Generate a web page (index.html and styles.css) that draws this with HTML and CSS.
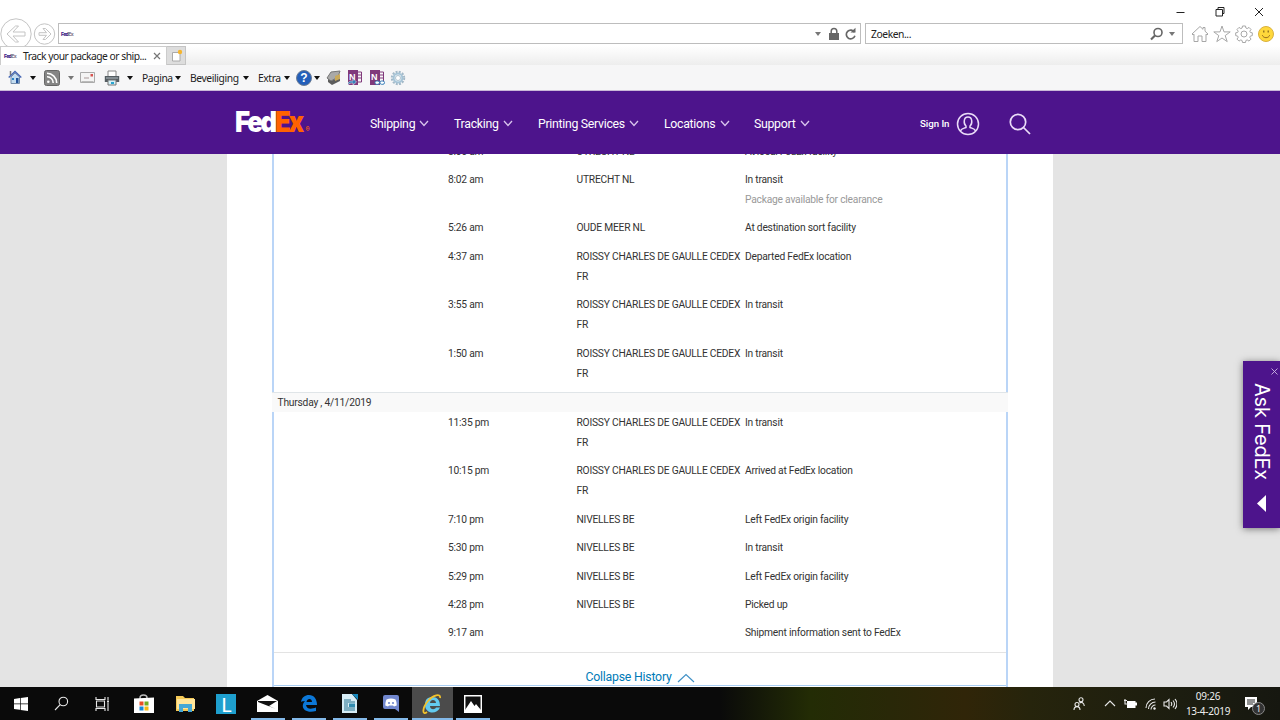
FILE: index.html
```html
<!DOCTYPE html>
<html lang="nl">
<head>
<meta charset="utf-8">
<title>Track your package or shipment</title>
<link rel="stylesheet" href="styles.css">
</head>
<body>
<div class="window">
  <header class="chrome">
    <div class="window-buttons">
      <svg width="12" height="12" viewBox="0 0 12 12"><path d="M1.500 6.500h8" class="ink"/></svg>
      <svg width="12" height="12" viewBox="0 0 12 12"><path d="M2 3.500h6.500v6.500H2zM4 3.500v-2h6v6H8.500" class="ink"/></svg>
      <svg width="12" height="12" viewBox="0 0 12 12"><path d="M2 2l8 8M10 2L2 10" class="ink"/></svg>
    </div>
    <div class="address-row">
      <div class="nav-circles">
        <svg width="56" height="33" viewBox="0 0 56 33"><g fill="#fff" stroke="#c4c4c4"><circle cx="16" cy="16" r="15.200"/><circle cx="44.500" cy="16" r="10.200"/><path d="M7 16l8.500-8h3l-5.500 6h12v4H13l5.500 6h-3zM51 16l-5.500-5.500h-2.500l3.500 4.200h-7.500v2.600h7.500L43 21.500h2.500z"/></g></svg>
      </div>
      <div class="address">
        <span class="mini-logo">Fed<i>Ex</i></span>
        <span class="tri tri-soft push"></span>
        <svg class="lock" width="12" height="14" viewBox="0 0 12 14"><path d="M1 6h10v7H1z" fill="#666"/><path d="M3.200 6V4.200a2.800 2.800 0 0 1 5.600 0V6" fill="none" stroke="#666" stroke-width="1.500"/></svg>
        <svg class="reload" width="13" height="14" viewBox="0 0 13 14"><path d="M10.500 5.200a4.400 4.400 0 1 0 .4 3.600" fill="none" stroke="#666" stroke-width="1.700"/><path d="M6.500 5.600h5V.8z" fill="#666"/></svg>
      </div>
      <div class="search">
        <span>Zoeken...</span>
        <svg class="push" width="14" height="14" viewBox="0 0 14 14"><circle cx="8" cy="5.500" r="4" fill="none" stroke="#666" stroke-width="1.600"/><path d="M5 8.500l-4 4" stroke="#666" stroke-width="2.200"/></svg>
        <span class="tri tri-soft"></span>
      </div>
      <div class="tools">
        <svg width="18" height="18" viewBox="0 0 18 18"><path d="M1 9l8-7.500 3 2.800V2.500h2v3.700L17 9l-1 1-1-.8V16.500h-4V11H7v5.500H3V9.200l-1 .8z" class="outline"/></svg>
        <svg width="18" height="18" viewBox="0 0 18 18"><path d="M9 1l2 5.900h6.200l-5 3.700 2 6L9 13l-5.200 3.600 2-6-5-3.700H7z" class="outline"/></svg>
        <svg width="18" height="18" viewBox="0 0 18 18"><path d="M7.500 1h3l.4 2 1.300.6 1.800-1.200 2 2.100-1.200 1.700.5 1.200 2 .4v2.800l-2 .5-.5 1.200 1.200 1.800-2 2-1.800-1.200-1.300.6-.4 2h-3l-.4-2-1.300-.6L4 16.100l-2-2 1.200-1.800-.5-1.200-2-.5V7.800l2-.4.500-1.200L2 4.500l2-2.100 1.800 1.200L7.100 3z" class="outline"/><circle cx="9" cy="9" r="3" class="outline"/></svg>
        <svg width="18" height="18" viewBox="0 0 18 18"><circle cx="9" cy="9" r="7.500" fill="#ffd83b" stroke="#d9b13f"/><path d="M5.300 10.200c1.200 3.300 6.200 3.300 7.400 0" fill="none" stroke="#9a701d"/><path d="M6.800 5.500v2M11.200 5.500v2" stroke="#80631b" stroke-width="1.200"/></svg>
      </div>
    </div>
    <div class="tab-row">
      <div class="tab"><span class="mini-logo">Fed<i>Ex</i></span><span class="tab-title">Track your package or ship...</span>
        <svg width="8" height="8" viewBox="0 0 8 8"><path d="M1 1l6 6M7 1L1 7" stroke="#777" stroke-width="1.200"/></svg></div>
      <div class="new-tab"><svg width="12" height="13" viewBox="0 0 12 13"><path d="M1.500 3.500h7.500v8.500H1.500z" fill="#fff" stroke="#aaa"/><circle cx="9" cy="3" r="2.200" fill="#f5b52e"/></svg></div>
    </div>
    <div class="command-row">
      <svg class="c-home" width="14" height="15" viewBox="0 0 14 15"><path d="M3 7v6.500h8.500V7L7 3z" fill="#c3dcf0" stroke="#778eaa"/><path d="M.7 7.500L7 1.500l6.300 6" fill="none" stroke="#4566b3" stroke-width="1.400"/><path d="M2.500 1v4" stroke="#777" stroke-width="1.500"/><path d="M8 8h2.500v5H8z" fill="#21529b"/><path d="M4 8h2v2H4z" fill="#2d85c6"/></svg>
      <span class="tri"></span>
      <svg class="c-rss" width="16" height="16" viewBox="0 0 16 16"><rect x=".5" y=".5" width="15" height="15" rx="2" fill="#858585" stroke="#666"/><circle cx="4.300" cy="11.700" r="1.300" fill="#fff"/><path d="M3 6.800a6 6 0 0 1 6.200 6.200M3 3.300A9.700 9.700 0 0 1 12.700 13" fill="none" stroke="#fff" stroke-width="1.600"/></svg>
      <span class="tri tri-soft"></span>
      <svg class="c-mail" width="15" height="11" viewBox="0 0 15 11"><path d="M.5.500h14v10H.5z" fill="#f4f4f4" stroke="#aaa"/><path d="M1.500 9.500h12" stroke="#bbb"/><path d="M10.500 2h2.500v2.500h-2.500z" fill="#d65451"/><path d="M4 6h5" stroke="#a99"/></svg>
      <svg class="c-print" width="16" height="16" viewBox="0 0 16 16"><path d="M4 1h8v6H4z" fill="#fff" stroke="#888"/><path d="M.8 6h14.400v6H.8z" fill="#555d62"/><path d="M2 8h12" stroke="#b5bfc4"/><path d="M4 10h8v5H4z" fill="#d8f0f7" stroke="#777"/><path d="M7 12h3v2H7z" fill="#28a5d1"/></svg>
      <span class="tri"></span>
      <span class="cmd c-page">Pagina</span><span class="tri"></span>
      <span class="cmd c-sec">Beveiliging</span><span class="tri"></span>
      <span class="cmd c-extra">Extra</span><span class="tri"></span>
      <span class="help">?</span><span class="tri help-tri"></span>
      <svg class="c-block" width="16" height="16" viewBox="0 0 16 16"><path d="M1 8l4-6 9-1-2 6-7 4z" fill="#a9a9a9" stroke="#777"/><path d="M2 9l3 2 9-4v4l-8 4-4-3z" fill="#5c5c5c"/><path d="M9 6l5-2v5l-5 2z" fill="#c9a95a"/></svg>
      <span class="onenote">N<svg width="15" height="15" viewBox="0 0 15 15"><path d="M10 2h3.500v10H10M10 5h3M10 8h3" fill="none" stroke="#80397b"/><path d="M0 15c0-4 2-4 5-4V8.500l3.500 3.500L5 15v-2c-2 0-4 0-5 2z" fill="#347db8" stroke="#f6f6f7" stroke-width=".5"/></svg></span>
      <span class="onenote on-two">N<svg width="15" height="15" viewBox="0 0 15 15"><path d="M10 2h3.500v10H10M10 5h3M10 8h3" fill="none" stroke="#80397b"/><rect x="5" y="11" width="4.500" height="3.300" rx="1.600" fill="#fff" stroke="#347db8"/><rect x="10" y="11" width="4.500" height="3.300" rx="1.600" fill="#fff" stroke="#347db8"/></svg></span>
      <svg class="c-gear" width="16" height="16" viewBox="0 0 16 16"><circle cx="8" cy="8" r="6.200" fill="none" stroke="#a3b9c8" stroke-width="2" stroke-dasharray="2 1.250"/><circle cx="8" cy="8" r="4.400" fill="#e4f0f7" stroke="#a5c3d6" stroke-width="2"/><circle cx="8" cy="8" r="2.500" fill="#fff" stroke="#b2c4cf"/></svg>
    </div>
  </header>

  <nav class="site-nav">
    <div class="brand"><div class="wordmark">Fed<span>Ex</span><small>®</small></div></div>
    <div class="menu m-ship"><span>Shipping</span><svg class="chev" width="10" height="7" viewBox="0 0 10 7"><path d="M1 1l4 4.500L9 1"/></svg></div>
    <div class="menu m-track"><span>Tracking</span><svg class="chev" width="10" height="7" viewBox="0 0 10 7"><path d="M1 1l4 4.500L9 1"/></svg></div>
    <div class="menu m-print"><span>Printing Services</span><svg class="chev" width="10" height="7" viewBox="0 0 10 7"><path d="M1 1l4 4.500L9 1"/></svg></div>
    <div class="menu m-loc"><span>Locations</span><svg class="chev" width="10" height="7" viewBox="0 0 10 7"><path d="M1 1l4 4.500L9 1"/></svg></div>
    <div class="menu m-sup"><span>Support</span><svg class="chev" width="10" height="7" viewBox="0 0 10 7"><path d="M1 1l4 4.500L9 1"/></svg></div>
    <span class="sign-in">Sign In</span>
    <svg class="user" width="24" height="24" viewBox="0 0 24 24"><g fill="none" stroke="#eadcf8" stroke-width="1.500"><circle cx="12" cy="12" r="10.500"/><path d="M4.500 19c.5-2.500 3-2.500 5.500-3.500v-1.500C7.500 12 7.200 5 12 5s4.500 7 2 9v1.500c2.500 1 5 1 5.500 3.500"/></g></svg>
    <svg class="find" width="22" height="22" viewBox="0 0 22 22"><g fill="none" stroke="#eadcf8" stroke-width="1.700"><circle cx="9" cy="9" r="7.700"/><path d="M14.500 14.500l6.500 6.500"/></g></svg>
  </nav>

  <main class="page">
    <div class="panel">
      <section class="history">
        <div class="rows rows-top">
          <div class="row"><time>8:06 am</time><span>UTRECHT NL</span><span>At local FedEx facility</span></div>
          <div class="row"><time>8:02 am</time><span>UTRECHT NL</span><span>In transit<br><em>Package available for clearance</em></span></div>
          <div class="row"><time>5:26 am</time><span>OUDE MEER NL</span><span>At destination sort facility</span></div>
          <div class="row"><time>4:37 am</time><span>ROISSY CHARLES DE GAULLE CEDEX<br>FR</span><span>Departed FedEx location</span></div>
          <div class="row"><time>3:55 am</time><span>ROISSY CHARLES DE GAULLE CEDEX<br>FR</span><span>In transit</span></div>
          <div class="row"><time>1:50 am</time><span>ROISSY CHARLES DE GAULLE CEDEX<br>FR</span><span>In transit</span></div>
        </div>
        <h2 class="day">Thursday , 4/11/2019</h2>
        <div class="rows rows-bottom">
          <div class="row"><time>11:35 pm</time><span>ROISSY CHARLES DE GAULLE CEDEX<br>FR</span><span>In transit</span></div>
          <div class="row"><time>10:15 pm</time><span>ROISSY CHARLES DE GAULLE CEDEX<br>FR</span><span>Arrived at FedEx location</span></div>
          <div class="row"><time>7:10 pm</time><span>NIVELLES BE</span><span>Left FedEx origin facility</span></div>
          <div class="row"><time>5:30 pm</time><span>NIVELLES BE</span><span>In transit</span></div>
          <div class="row"><time>5:29 pm</time><span>NIVELLES BE</span><span>Left FedEx origin facility</span></div>
          <div class="row"><time>4:28 pm</time><span>NIVELLES BE</span><span>Picked up</span></div>
          <div class="row"><time>9:17 am</time><span></span><span>Shipment information sent to FedEx</span></div>
        </div>
        <div class="collapse"><span>Collapse History</span><svg width="18" height="10" viewBox="0 0 18 10"><path d="M1 9l8-7.500L17 9" fill="none" stroke="#4191c6" stroke-width="1.200"/></svg></div>
      </section>
    </div>
  </main>

  <aside class="ask">
    <svg width="7" height="7" viewBox="0 0 7 7"><path d="M.5.500l6 6M6.500.500l-6 6" stroke="#cdb6e4" stroke-width=".9"/></svg>
    <span>Ask FedEx</span>
    <svg class="ask-arrow" width="9" height="17" viewBox="0 0 9 17"><path d="M9 0v17L0 8.500z" fill="#fff"/></svg>
  </aside>

  <footer class="taskbar">
    <div class="apps">
      <div><svg width="14" height="14" viewBox="0 0 14 14"><path d="M0 2l6-.9v5.500H0zM6.700 1L14 0v6.600H6.700zM0 7.300h6v5.500L0 12zM6.700 7.300H14V14l-7.300-1z" fill="#fff"/></svg></div>
      <div><svg width="15" height="15" viewBox="0 0 15 15"><circle cx="9.300" cy="5.500" r="4.300" class="light"/><path d="M6.200 8.700L1 14" class="light"/></svg></div>
      <div><svg width="15" height="14" viewBox="0 0 15 14"><path d="M1.500 4h8v6h-8zM1 0v2.500h9V0M1 14v-2.500h9V14M13 0v3M13 6v8" class="light"/><path d="M12 3.500h2v2h-2z" fill="#ddd"/></svg></div>
      <div><svg width="20" height="20" viewBox="0 0 20 20"><path d="M6 6V4c0-4 7-4 7 0v2" fill="none" stroke="#bbb" stroke-width="1.500"/><path d="M0 4.500l20-1V19H0z" fill="#fff"/><path d="M5.500 7.500h4v4h-4z" fill="#e84f26"/><path d="M10.500 7.500h4v4h-4z" fill="#72ad22"/><path d="M5.500 12.500h4v4h-4z" fill="#1689d9"/><path d="M10.500 12.500h4v4h-4z" fill="#f5b914"/></svg></div>
      <div><svg width="19" height="17" viewBox="0 0 19 17"><path d="M0 1h7l2 2h9v13H0z" fill="#f5c956"/><path d="M1 4h18v10H1z" fill="#ffe59a"/><path d="M3 17V9h13v8h-4v-4H7v4z" fill="#45a7d5"/></svg></div>
      <div><span class="l-app">L</span></div>
      <div class="open"><svg width="21" height="17" viewBox="0 0 21 17"><path d="M0 6l10.500-6L21 6v11H0z" fill="#fff"/><path d="M1 6h19l-8 5 7 3L1 7z" fill="#111"/></svg></div>
      <div class="open"><svg width="18" height="17" viewBox="0 0 18 17"><path d="M1 7C2 2 5 0 9 0c5 0 8 4 8 10H6c1 5 6 4 10 2.500V16C6 19-1 13 5 6c-2 .2-3 .2-4 1zM6.500 7H12c0-4-5-4-5.500 0z" fill="#0c78d8"/></svg></div>
      <div class="open"><svg width="16" height="19" viewBox="0 0 16 19"><path d="M0 0h10l5 6v13H0z" fill="#d7edf6"/><path d="M10 0h6v6z" fill="#1688bd"/><path d="M2 6h7M2 8h11M2 10h4M2 12h4M2 14h11M2 16h11" stroke="#24718e"/><path d="M7 9.500h6v3.500H7z" fill="#328db1"/></svg></div>
      <div class="open"><svg width="16" height="17" viewBox="0 0 16 17"><path d="M2 0h12a2 2 0 0 1 2 2v15l-4-3H2a2 2 0 0 1-2-2V2a2 2 0 0 1 2-2z" fill="#7187ce"/><path d="M3.500 4.500c3-1.500 6-1.500 9 0 1 2 1.300 4 1.200 6L11 11.500l-1-1H6l-1 1-2.700-1c0-2 .3-4 1.200-6z" fill="#fff"/><circle cx="6" cy="8" r="1.100" fill="#7187ce"/><circle cx="10" cy="8" r="1.100" fill="#7187ce"/></svg></div>
      <div class="open active"><svg width="20" height="20" viewBox="0 0 20 20"><path d="M3 11C3 5 6 3 10.500 3S18 6 18 12H8c0 4 5 4 6 1.500h4C15 21 3 20 3 11zm5-2h6c0-4-6-4-6 0z" fill="#63caef"/><path d="M5 18C0 22 0 14 6 7 11 1 19-1 18 4" fill="none" stroke="#f2c22c" stroke-width="1.800"/></svg></div>
      <div class="open"><svg width="18" height="18" viewBox="0 0 18 18"><path d="M.7.700h16.600v16.600H.7z" fill="#111" stroke="#fff" stroke-width="1.500"/><path d="M1 15l6-9 3.500 5L12 9l5 6v2H1z" fill="#fff"/></svg></div>
    </div>
    <div class="tray">
      <svg class="t-people" width="12" height="14" viewBox="0 0 12 14"><g class="light"><circle cx="8" cy="2.700" r="2"/><circle cx="4" cy="7.500" r="2"/><path d="M1 13c0-4.500 6-4.500 6 0M6.500 6c2-1.500 4.500 0 4.800 3"/></g></svg>
      <svg class="t-up" width="12" height="7" viewBox="0 0 12 7"><path d="M1 6l5-5 5 5" class="light"/></svg>
      <svg class="t-bat" width="13" height="10" viewBox="0 0 13 10"><path d="M3 2h8.500v1.500H13v3h-1.500V9H3z" fill="#fff"/><path d="M0 1.500h3M1 0v5h3" class="light"/></svg>
      <svg class="t-wifi" width="12" height="12" viewBox="0 0 12 12"><g class="light"><path d="M1 10A9 9 0 0 1 10 1M3.500 11A7 7 0 0 1 10.500 4M6 11.500A4.500 4.500 0 0 1 10.500 7"/></g><circle cx="9.500" cy="10.500" r="1.200" fill="#eee"/></svg>
      <svg class="t-sound" width="14" height="12" viewBox="0 0 14 12"><path d="M1 4h2.500L6 1.500v9L3.500 8H1zM8 4.200q1.500 1.800 0 3.600M10 2.500q3 3.500 0 7M12 1q4 5 0 10" class="light"/></svg>
      <div class="clock"><span>09:26</span><span>13-4-2019</span></div>
      <div class="notify"><svg width="13" height="14" viewBox="0 0 13 14"><path d="M0 0h12v10H6l-3 3v-3H0z" fill="#fff"/><path d="M2 3h8M2 5h8M2 7h6" stroke="#222"/></svg><b>1</b></div>
    </div>
  </footer>
</div>
</body>
</html>
```
FILE: styles.css
```css
* { box-sizing: border-box; }
body { margin: 0; background: #fff; }
.window {
  position: relative;
  width: 1280px;
  height: 720px;
  overflow: hidden;
  display: flex;
  flex-direction: column;
  font-family: Roboto, sans-serif;
}
svg { display: block; flex: none; }
.ink { fill: none; stroke: #222; }
.outline { fill: #fff; stroke: #a7a7a7; }
.light { fill: none; stroke: #e8e8e8; stroke-width: 1.1; }
.push { margin-left: auto; }

/* browser chrome */
.chrome { height: 91px; flex: none; font-family: "Noto Sans", sans-serif; color: #222; }
.window-buttons { height: 18px; display: flex; justify-content: flex-end; gap: 27px; padding: 6px 15px 0 0; }
.address-row { height: 28px; display: flex; }
.nav-circles { width: 58px; flex: none; }
.address, .search {
  height: 21px;
  margin-top: 5px;
  border: 1px solid #bdbdbd;
  background: #fff;
  display: flex;
  align-items: center;
}
.address { width: 803px; padding: 0 3px 0 2px; }
.search { width: 318px; margin-left: 4px; padding: 0 7px 0 5px; font-size: 10.300px; letter-spacing: -.55px; }
.search span:first-child { word-spacing: 0; letter-spacing: -.43px; }
.search .tri { margin-left: 5px; }
.mini-logo { font: 800 5px Inter, sans-serif; letter-spacing: -.6px; color: #3d2585; }
.mini-logo i { font-style: normal; color: #8a8090; }
.tri { flex: none; border: 3px solid transparent; border-top: 4px solid #111; border-bottom: 0; }
.tri-soft { border-top-color: #777; }
.lock { margin-left: 7px; }
.reload { margin-left: 4px; }
.tools { display: flex; gap: 4px; margin: 7px 0 0 8px; }
.tab-row { height: 19px; display: flex; background: linear-gradient(#fff, #ededed); position: relative; }
.tab { width: 167px; border: 1px solid #ccc; border-bottom: 0; background: #fff; display: flex; align-items: center; padding-left: 3px; }
.tab-title { width: 125px; margin: 0 5px 0 7px; font-size: 10.300px; letter-spacing: -.5px; white-space: nowrap; }
.new-tab { width: 19px; background: #ddd; border: 1px solid #c4c4c4; border-left: 0; padding: 2px 0 0 4px; }
.command-row { height: 26px; display: flex; align-items: center; background: #f6f6f7; border-bottom: 1px solid #c9b8d8; padding-left: 8px; font-size: 10.300px; }
.c-home { margin-right: 8px; }
.c-rss { margin: 0 8px 0 8px; }
.c-mail { margin: 0 9px 0 6px; }
.c-print { margin-right: 7px; }
.cmd { white-space: nowrap; letter-spacing: -.4px; margin-right: 3px; padding-top: 1px; }
.c-page { width: 30px; margin-left: 9px; }
.c-sec { width: 50px; margin-left: 9px; }
.c-extra { width: 23px; margin-left: 9px; }
.help { width: 16px; height: 16px; flex: none; margin-left: 6px; border-radius: 50%; background: #245fba; border: 1px solid #6f7f96; color: #fff; font: bold 12px/14px "Liberation Sans", sans-serif; text-align: center; }
.help-tri { margin-left: 2px; }
.c-block { margin: 0 6px 0 6px; }
.onenote { position: relative; width: 15px; height: 15px; padding-left: 1px; background: linear-gradient(90deg, #80397b 10px, transparent 10px); color: #fff; font: bold 9px/14px "Liberation Sans", sans-serif; }
.onenote svg { position: absolute; left: 0; top: 0; }
.on-two { margin-left: 7px; }
.c-gear { margin-left: 5px; }

/* site navigation */
.site-nav { height: 63px; flex: none; background: #4d148c; color: #fff; display: flex; align-items: center; padding: 0 0 0 235px; z-index: 1; }
.brand { width: 135px; padding-top: 6px; }
.wordmark { width: 100px; font: 900 29px/30px Inter, sans-serif; letter-spacing: -2.600px; white-space: nowrap; transform: scaleX(.89); transform-origin: left; }
.wordmark span { color: #ff6200; }
.wordmark small { color: #ff6200; font-size: 7px; letter-spacing: 0; margin-left: 4px; }
.menu { display: flex; align-items: center; justify-content: space-between; font-size: 12.300px; letter-spacing: -.29px; white-space: nowrap; padding-top: 2px; }
.m-ship { width: 59px; }
.m-track { width: 59px; margin-left: 25px; }
.m-print { width: 101px; margin-left: 25px; }
.m-loc { width: 66px; margin-left: 25px; }
.m-sup { width: 56px; margin-left: 24px; }
.chev { fill: none; stroke: #d8c4ed; stroke-width: 1.300; }
.sign-in { width: 31px; margin-left: 110px; padding-top: 1px; font-size: 9.700px; font-weight: 500; letter-spacing: -.05px; white-space: nowrap; }
.user { margin: 2px 0 0 5px; }
.find { margin: 2px 0 0 29px; }

/* shipment history */
.page { height: 533px; flex: none; background: #e4e4e4; padding: 0 227px; }
.panel { width: 826px; height: 533px; background: #fff; padding: 0 44px 0 45px; overflow: hidden; }
.history { width: 736px; height: 532px; border-bottom: 1px solid #a9cef3; color: #333; font-size: 10.250px; letter-spacing: -.22px; line-height: 20px; display: flex; flex-direction: column; }
.rows { border-left: 2px solid #bad5f7; border-right: 2px solid #bad5f7; padding-left: 174px; }
.rows-top { height: 238px; display: flex; flex-direction: column; justify-content: flex-end; }
.rows-bottom { height: 241px; padding-top: 1px; }
.row { display: grid; grid-template-columns: 128.500px 168.500px 1fr; padding-bottom: 8.400px; flex: none; white-space: nowrap; }
.row em { font-style: normal; color: #999; }
.day { height: 20px; margin: 0; padding-left: 5.500px; background: #f9f9f9; border-top: 1px solid #e0e5e8; font-size: 10.250px; line-height: 20px; font-weight: 400; flex: none; }
.collapse { flex: 1; border: 2px solid #bad5f7; border-width: 0 2px; box-shadow: inset 0 1px #e3e3e3; display: flex; justify-content: center; padding: 15px 0 0 0; gap: 5px; font-size: 12.300px; color: #007ab7; letter-spacing: -.22px; }
.collapse svg { margin-top: 6px; }

/* chat tab pinned over the page edge */
.ask { position: absolute; right: 0; top: 361px; width: 37px; height: 167px; background: #4d148c; box-shadow: 0 1px 7px #777; display: flex; flex-direction: column; align-items: center; color: #fff; padding-top: 7px; z-index: 2; }
.ask > svg:first-child { align-self: flex-end; margin-right: 2px; }
.ask span { writing-mode: vertical-rl; font: 20px/24px Inter, sans-serif; letter-spacing: -.2px; height: 98px; margin-top: 8px; white-space: nowrap; }
.ask-arrow { margin-top: 14px; }

/* taskbar */
.taskbar { height: 33px; flex: none; background: linear-gradient(90deg, #0a0a0a 720px, #232c05 810px, #292808 890px, #302508 965px, #26240c 1030px, #1c1d10 1180px, #161710); display: flex; justify-content: space-between; font-family: "Noto Sans", sans-serif; color: #eee; }
.apps { width: 494px; display: grid; grid-template-columns: repeat(12, 1fr); }
.apps div { display: flex; align-items: center; justify-content: center; }
.apps .open { background: linear-gradient(#83b9e9, #83b9e9) 50% 100% / 34px 2px no-repeat; }
.apps .active { background: linear-gradient(transparent 31px, #83b9e9 31px), #4b4b4b; }
.l-app { width: 20px; height: 20px; background: #1e9fce; color: #fff; font: 20px/20px Lato, sans-serif; text-align: center; }
.tray { width: 207px; display: flex; align-items: center; }
.t-up { margin-left: 19px; }
.t-bat { margin-left: 8px; }
.t-wifi { margin-left: 8px; }
.t-sound { margin-left: 6px; }
.clock { width: 50px; margin-left: 6px; display: flex; flex-direction: column; text-align: center; font-size: 10px; line-height: 15px; letter-spacing: -.25px; white-space: nowrap; }
.notify { position: relative; margin-left: 12px; }
.notify b { position: absolute; left: 7px; top: 5px; width: 13px; height: 13px; border: 1px solid #888; border-radius: 50%; background: #333; font-size: 9px; line-height: 11px; font-weight: 400; text-align: center; }
```
